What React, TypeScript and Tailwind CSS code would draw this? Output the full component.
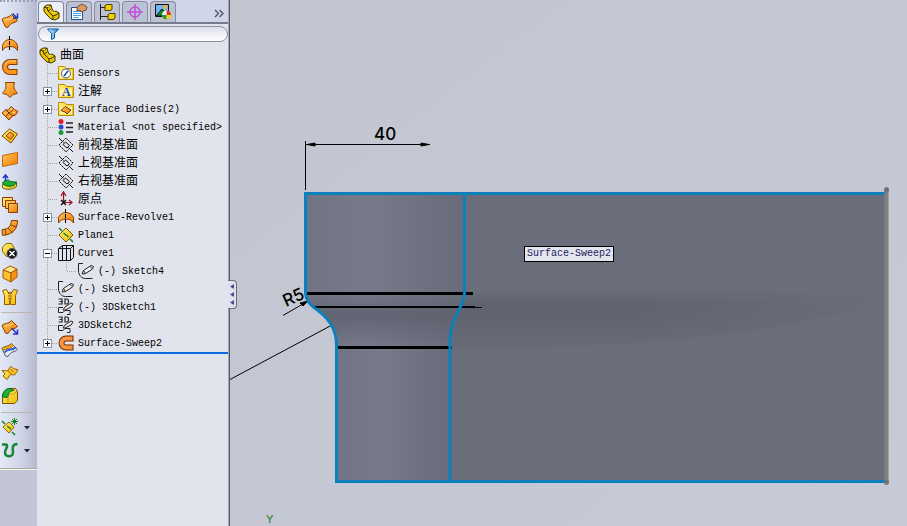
import { useState } from "react";
import type { ReactNode } from "react";

type Tool = { name: string; art: ReactNode; menu?: boolean };

type TreeNode = {
  label: string;
  icon: ReactNode;
  cjk?: boolean;
  expander?: "plus" | "minus";
  nested?: boolean;
  last?: boolean;
};

const stroke = "#8a3d00";

const Defs = () => (
  <svg className="absolute h-0 w-0" aria-hidden="true">
    <defs>
      <linearGradient id="orange" x1="0" y1="0" x2="1" y2="1">
        <stop offset="0" stopColor="#ffc65c" />
        <stop offset="1" stopColor="#ee7a00" />
      </linearGradient>
      <linearGradient id="yellow" x1="0" y1="0" x2="1" y2="1">
        <stop offset="0" stopColor="#fff27a" />
        <stop offset="1" stopColor="#f0b800" />
      </linearGradient>
      <linearGradient id="blue" x1="0" y1="0" x2="1" y2="0">
        <stop offset="0" stopColor="#e8f6ff" />
        <stop offset="1" stopColor="#1a86d8" />
      </linearGradient>
    </defs>
  </svg>
);

const wave = "M2 9.500C5 6.500 8 8.500 11.500 4.500L17.500 10.500C14 14 12 11 8 17.500L5.500 17z";

const tools: Tool[] = [
  {
    name: "Extruded Surface",
    art: (
      <>
        <path d={wave} fill="url(#orange)" stroke={stroke} />
        <path d="M5.500 10.500c3-2 4 0 7-3" fill="none" stroke="#ffe0a0" />
        <path d="M12.500 3.500l4 4M17.500 3.500v4.500H13" stroke="#1735c0" strokeWidth="1.500" fill="none" />
      </>
    ),
  },
  {
    name: "Revolved Surface",
    art: (
      <>
        <path d="M2.500 17.500v-5C4 8 7 6.500 10 6.500s6 2 7.500 6v5c-2-3-4-4-7.500-4s-5.500 1-7.500 4z" fill="url(#orange)" stroke={stroke} />
        <path d="M9.500 3v15" stroke="#000" strokeDasharray="4 1" />
      </>
    ),
  },
  {
    name: "Swept Surface",
    art: (
      <>
        <path d="M17.500 6H10a5 5 0 0 0 0 10h7.500" fill="none" stroke={stroke} strokeWidth="6" />
        <path d="M16.500 6H10a5 5 0 0 0 0 10h6.500" fill="none" stroke="#fa951e" strokeWidth="4" />
        <path d="M16 5h-6a6 6 0 0 0-5 4" fill="none" stroke="#ffcb73" />
      </>
    ),
  },
  {
    name: "Lofted Surface",
    art: (
      <path
        d="M5.500 3.500h9c-1 4-1 7 3 10.500c-2 1.500-3 1-4.500 1.500l-3 3-3-3c-1.500-.5-3 0-4.500-1.500C6 11 6.500 8 5.500 3.500z"
        fill="url(#orange)"
        stroke={stroke}
      />
    ),
  },
  {
    name: "Boundary Surface",
    art: (
      <>
        <path d="M2 11l4-3.500 2 1 3-4 3.500 3 3.500 2-3 4h-2l-4 4.500-3-3z" fill="url(#orange)" stroke={stroke} />
        <path d="M6 8l3 3 4-3M6 14l3-3 4 3" stroke={stroke} fill="none" />
        <path d="M4.500 10.500l2 1M10 7h2M9 14l1 1M13 10.500h2" stroke="#ffe39a" />
      </>
    ),
  },
  {
    name: "Filled Surface",
    art: (
      <>
        <path d="M2 11l7.500-7 8 5-6.500 9z" fill="url(#yellow)" stroke={stroke} />
        <path d="M6 11l4-4 4 3-3.500 4.500z" fill="url(#orange)" stroke={stroke} />
      </>
    ),
  },
  { name: "Planar Surface", art: <path d="M2.500 7.500l15-3v11l-15 3z" fill="url(#orange)" stroke="#c86510" /> },
  {
    name: "Offset Surface",
    art: (
      <>
        <path d="M2.500 13.500v3c3 3 11 2 14-1v-4z" fill="url(#yellow)" stroke="#5d6500" />
        <path d="M2.500 12c2-3 5-3 6-3 1 2 5 2 8 2-1 5-11 6-14 1z" fill="#1fb031" stroke="#08651a" />
        <path d="M5.500 10V4M3 7l2.500-3L8 7" stroke="#1735d0" strokeWidth="1.500" fill="none" />
      </>
    ),
  },
  {
    name: "Radiate Surface",
    art: (
      <g stroke={stroke}>
        <path d="M2.500 3.500h10v9h-10z" fill="#ffe06a" />
        <path d="M5.500 6.500h10v8h-10z" fill="#ffc14d" />
        <path d="M8.500 9.500h9v9h-9z" fill="url(#orange)" />
      </g>
    ),
  },
  {
    name: "Ruled Surface",
    art: (
      <>
        <path d="M11.500 3.500h6c0 9-5 14-15 15l-.5-6c6 0 9-3 9.500-9z" fill="url(#orange)" stroke={stroke} />
        <path d="M11 8l6 2M8 11l5 5M5 12l1 6" stroke={stroke} />
      </>
    ),
  },
  {
    name: "Delete Face",
    art: (
      <>
        <path d="M2.500 7l4-3.500h5l3 5-3 8h-5l-4-5z" fill="url(#yellow)" stroke="#8c6500" />
        <circle cx="12" cy="13.500" r="5" fill="#171717" stroke="#555" />
        <path d="M9.500 11l5 5m0-5l-5 5" stroke="#fff" strokeWidth="1.500" />
      </>
    ),
  },
  {
    name: "Replace Face",
    art: (
      <g stroke="#a45a00">
        <path d="M3 7l7-4 7 3-6 4z" fill="#ffe68c" />
        <path d="M3 7l8 3v9l-8-4z" fill="#ffbf35" />
        <path d="M11 10l6-4v8l-6 5z" fill="#f49410" />
      </g>
    ),
  },
  {
    name: "Knit Surface",
    art: (
      <>
        <path d="M2.500 4.500l4-1 1.500 3h4l1.500-3 4 1-2 5v9h-5l-.500-5-.500 5h-5v-9z" fill="url(#yellow)" stroke="#9a5a00" />
        <path d="M10 6v8M8 7.500h1m2 0h1M8 10h1m2 0h1M8 12.500h1m2 0h1" stroke="#b05000" />
      </>
    ),
  },
];

const tools2: Tool[] = [
  {
    name: "Extend Surface",
    art: (
      <>
        <path d={wave} fill="url(#orange)" stroke={stroke} />
        <path d="M5.500 10.500c3-2 4 0 7-3" fill="none" stroke="#ffe0a0" />
        <path d="M11.500 12l6 6M17.500 13.500V18H13" stroke="#2a34c8" strokeWidth="1.500" fill="none" />
      </>
    ),
  },
  {
    name: "Trim Surface",
    art: (
      <>
        <path d={wave} fill="#e9ecf4" stroke="#555" />
        <path d="M2 9.500c3-3 6-1 9.500-5l2 2c-3 4-7 2-10 5z" fill="#f5b52a" stroke="#9a6500" />
        <path d="M4.500 13.500c4-5 7-1 11-5" stroke="#305dd8" strokeWidth="2" fill="none" />
      </>
    ),
  },
  {
    name: "Untrim Surface",
    art: (
      <>
        <path d="M2 8.500l5.500.5 3-4.500 3 2 4.500 1.500-3.500 5-4-.5-3.500 5-4-3.500 2-2z" fill="url(#yellow)" stroke="#9a5a00" />
        <path d="M8 9l4 3.500M10 7l4 3" stroke="#e07600" strokeWidth="1.500" />
      </>
    ),
  },
  {
    name: "Fillet",
    art: (
      <>
        <path d="M2.500 9l6-5.500h7l2 3v9l-3 3h-12z" fill="url(#yellow)" stroke="#7b5200" />
        <path d="M2.500 12c0-5 3-8.500 7-8.500 2 0 4 1 4.500 2-4 0-6 3-6 7z" fill="#1fb031" stroke="#08651a" />
        <path d="M8 12v6M8 12c0-2 2-3 6-3l3-3" stroke="#c89a10" fill="none" />
      </>
    ),
  },
];

const tools3: Tool[] = [
  {
    name: "Reference Geometry",
    menu: true,
    art: (
      <>
        <path d="M3 11l6-5 5 5-5 6z" fill="url(#yellow)" stroke="#856500" />
        <path d="M2 5l3 3M12 16l3 3M7 10l4 3" stroke="#178024" strokeWidth="1.500" />
        <path d="M14.500 2v7M11 5.500h7M12 3l5 5m0-5l-5 5" stroke="#178024" />
      </>
    ),
  },
  {
    name: "Curves",
    menu: true,
    art: (
      <path
        d="M2 5.500h4c3 1-1 5-1 8 0 5 8 5 8 0 0-4-2-8 4.500-8.500"
        fill="none"
        stroke="#16853a"
        strokeWidth="2.500"
      />
    ),
  },
];

const Part = () => (
  <g stroke="#3f3500">
    <path d="M1 3l3-2h4l1 4 2 3 2-1 3 2v5l-4 2-4-1-5-5-2-3z" fill="#e8c500" />
    <path d="M1 3l3 1 1 3 5 5 3-1 3-2M4 4l4-3M10 12v3M5 7l3-2" fill="none" />
    <path d="M4.500 2.500h1.500M10 9l2-1" fill="none" stroke="#fff9b0" />
  </g>
);

const Folder = ({ children }: { children: ReactNode }) => (
  <>
    <path d="M.5 3.500v-2h6l2 2h7v11H.5z" fill="url(#yellow)" stroke="#b98b00" />
    <path d="M2 5.500h12v8H2z" fill="#fff3a4" />
    {children}
  </>
);

const PlaneArt = () => (
  <g fill="none" stroke="#111">
    <path d="M1 8l7-7 7 7-7 7z" strokeDasharray="2 .6" />
    <path d="M1 1l4.500 4.500M10.500 10.500L15 15M5 7.500L7.500 5l4 3.500L9 11z" />
  </g>
);

const SketchArt = () => (
  <g fill="none" stroke="#222">
    <path d="M5 .5H.5V8c0 4 3 7.500 7 7.500h7" />
    <path d="M4 11l1.500-3.500L13 2.500l2.500 1-1 2.500-7 4.500z" fill="#f0f0f0" />
    <path d="M12 3.500l2 2M5.500 7.500l2 3" />
  </g>
);

const Sketch3DArt = () => (
  <g fill="none" stroke="#222">
    <path d="M.500 0H4v5H.500M1.500 2.500H4M7 0h2c2 0 2 5 0 5H7z" strokeWidth="1.200" />
    <path d="M5 11l2-3 6-4 2 1-2 3-6 3z" fill="#eee" />
    <path d="M5 8.500H.500v5H5l2-2h5v4H9" />
  </g>
);

const RevolveArt = () => (
  <>
    <path d="M.5 14V8.500C2 5 5 3.500 8 3.500s6 1.500 7.500 5V14c-2-3-4-4-7.500-4s-5.500 1-7.500 4z" fill="url(#orange)" stroke={stroke} />
    <path d="M7.500 0v15" stroke="#000" strokeDasharray="4 1" />
  </>
);

const SweepArt = () => (
  <>
    <path d="M15.500 3.500H8a4.500 4.500 0 0 0 0 9h7.500" fill="none" stroke="#6d2b00" strokeWidth="6" />
    <path d="M14.500 3.500H8a4.500 4.500 0 0 0 0 9h6.500" fill="none" stroke="#fb9440" strokeWidth="4" />
  </>
);

const tree: TreeNode[] = [
  {
    label: "Sensors",
    icon: (
      <Folder>
        <circle cx="8" cy="8.500" r="4.500" fill="#fff" stroke="#345a8c" />
        <path d="M6 11l4-5" stroke="#16408c" strokeWidth="1.500" />
      </Folder>
    ),
  },
  {
    label: "注解",
    cjk: true,
    expander: "plus",
    icon: (
      <Folder>
        <text x="4" y="13" fontFamily="Liberation Serif, serif" fontSize="12" fontWeight="700" fill="#1746b0">A</text>
      </Folder>
    ),
  },
  {
    label: "Surface Bodies(2)",
    expander: "plus",
    icon: (
      <Folder>
        <path d="M3 9.500l4-4 6 3.500-4 4-2-2z" fill="url(#orange)" stroke="#6d3500" />
      </Folder>
    ),
  },
  {
    label: "Material <not specified>",
    icon: (
      <>
        <circle cx="3" cy="2.500" r="2.500" fill="#e01c2c" />
        <circle cx="3" cy="8" r="2.500" fill="#3448d8" />
        <circle cx="3" cy="13.500" r="2.500" fill="#1c9c34" />
        <path d="M8 4h7M8 8.500h7M8 13h7" stroke="#222" strokeWidth="1.500" />
      </>
    ),
  },
  { label: "前视基准面", cjk: true, icon: <PlaneArt /> },
  { label: "上视基准面", cjk: true, icon: <PlaneArt /> },
  { label: "右视基准面", cjk: true, icon: <PlaneArt /> },
  {
    label: "原点",
    cjk: true,
    icon: (
      <>
        <path d="M5.500 12V2M3 5l2.500-4L8 5M6 11.500h8M11 9l3 2.500-3 2.500" stroke="#a00f1c" fill="none" strokeWidth="1.200" />
        <path d="M3 9l5 5m0-5l-5 5" stroke="#111" strokeWidth="1.500" />
      </>
    ),
  },
  { label: "Surface-Revolve1", expander: "plus", icon: <RevolveArt /> },
  {
    label: "Plane1",
    icon: (
      <>
        <path d="M1 8l7-7 7 7-7 7z" fill="url(#yellow)" stroke="#6c5b00" />
        <path d="M1 1l3 3M12 12l3 3M5.500 6l5 4" stroke="#178024" strokeWidth="1.500" />
      </>
    ),
  },
  {
    label: "Curve1",
    expander: "minus",
    icon: (
      <g fill="none" stroke="#111">
        <path d="M.5 3.500l4-3h11v12l-3 3H.5z" />
        <path d="M.5 3.500h4v12M4.500 3.500h8v12M8.500 1v14M12.500 3.500l3-3M4.500 1v3" />
      </g>
    ),
  },
  { label: "(-) Sketch4", nested: true, icon: <SketchArt /> },
  { label: "(-) Sketch3", icon: <SketchArt /> },
  { label: "(-) 3DSketch1", icon: <Sketch3DArt /> },
  { label: "3DSketch2", icon: <Sketch3DArt /> },
  { label: "Surface-Sweep2", expander: "plus", last: true, icon: <SweepArt /> },
];

const ToolGroup = ({ items }: { items: Tool[] }) => (
  <div className="flex flex-col">
    {items.map((tool) => (
      <button key={tool.name} aria-label={tool.name} className="flex h-[23px] items-center">
        <svg viewBox="0 0 22 23" className="h-[23px] w-[22px]">
          {tool.art}
        </svg>
        {tool.menu && (
          <svg viewBox="0 0 6 4" className="ml-0.5 h-1 w-1.5">
            <path d="M0 0h6L3 3.500z" fill="#20243c" />
          </svg>
        )}
      </button>
    ))}
  </div>
);

const Toolbar = () => (
  <aside className="flex w-[37px] shrink-0 flex-col bg-[#c1c5d6]">
    <div className="border-b border-[#f4f4f0] bg-linear-to-r from-[#e3e8f5] via-[#d3d8e9] to-[#b4b9d0]">
      <div className="border-b border-[#a9a99c] pb-1.5">
        <div className="border-t-2 border-dotted border-[#9ca0b4] pb-2" />
        <ToolGroup items={tools} />
        <hr className="my-[3px] ml-px border-[#bcb9a9]" />
        <ToolGroup items={tools2} />
        <hr className="mt-1 mb-[3px] ml-px border-[#bcb9a9]" />
        <ToolGroup items={tools3} />
      </div>
    </div>
  </aside>
);

const tabs: { id: string; art: ReactNode }[] = [
  { id: "Feature Tree", art: <Part /> },
  {
    id: "Properties",
    art: (
      <>
        <path d="M.5 3.500h11v12H.5z" fill="#fff" stroke="#1a4e94" />
        <path d="M2 7.500h8M2 9.500h8M2 11.500h8M2 13.500h6" stroke="#4aa0e8" />
        <path d="M6 3l5-3 5 3-1 3-5 2-1-2-3 1z" fill="#d99a66" stroke="#7d4a26" />
      </>
    ),
  },
  {
    id: "Configurations",
    art: (
      <>
        <path d="M1.500 0v16M1 3.500h6M1 12.500h9" stroke="#222" fill="none" />
        <path d="M6 1.500l2-1h5v5l-2 1H6zM9 10.500l2-1h5v5l-2 1H9z" fill="#f2d000" stroke="#4c4000" />
      </>
    ),
  },
  {
    id: "Dimensions",
    art: (
      <g fill="none" stroke="#c04fd8" strokeWidth="1.500">
        <circle cx="8" cy="8" r="5" />
        <path d="M8 0v16M0 8h16" />
      </g>
    ),
  },
  {
    id: "Display",
    art: (
      <>
        <path d="M.5.500h13v12H.5z" fill="#6cb6f4" stroke="#111" />
        <path d="M1 12l6-7 6 7z" fill="#138a2e" stroke="#111" />
        <circle cx="10" cy="3" r="2" fill="#ffb020" />
        <circle cx="11.500" cy="11" r="4.500" fill="#f4cd20" />
        <path d="M11.500 11V6.500A4.500 4.500 0 0 1 16 11z" fill="#e63220" />
        <path d="M11.500 11v4.500A4.500 4.500 0 0 1 7 11z" fill="#2b9b38" />
        <path d="M11.500 11V6.500A4.500 4.500 0 0 0 7 11z" fill="#e8f0ff" />
      </>
    ),
  },
];

const Tabs = () => {
  const [active, setActive] = useState("Feature Tree");

  return (
    <div className="flex h-6 items-end border-b-2 border-[#777b8c] bg-[#d0d5e7] pl-px">
      <div role="tablist" className="flex gap-0.5">
        {tabs.map((tab) => (
          <button
            key={tab.id}
            role="tab"
            aria-label={tab.id}
            aria-selected={active === tab.id}
            onClick={() => setActive(tab.id)}
            className={`flex h-[21px] w-[26px] items-center justify-center rounded-t-sm border border-b-0 border-[#858a9d] ${
              active === tab.id ? "bg-[#eceff6]" : "bg-[#bcc1d4]"
            }`}
          >
            <svg viewBox="-1 -1 18 18" className="h-[18px] w-[18px]">
              {tab.art}
            </svg>
          </button>
        ))}
      </div>
      <button aria-label="More" className="mr-1 mb-1 ml-auto">
        <svg viewBox="0 0 10 9" className="h-[9px] w-2.5">
          <path d="M1 1l3.500 3.500L1 8M5.500 1L9 4.500 5.500 8" fill="none" stroke="#4d5167" strokeWidth="1.300" />
        </svg>
      </button>
    </div>
  );
};

const Gutter = ({ node }: { node: TreeNode }) => (
  <span className="grid w-5 shrink-0">
    <svg viewBox="0 0 20 18" className="col-start-1 row-start-1 h-[18px] w-5">
      <path
        d={node.last ? "M10.500 0V9" : "M10.500 0V18"}
        stroke="#a9a696"
        strokeDasharray="1 1"
      />
      {!node.nested && <path d="M11 9.500H20" stroke="#a9a696" strokeDasharray="1 1" />}
    </svg>
    {node.expander && (
      <button
        aria-label={node.expander === "plus" ? "Expand" : "Collapse"}
        className="col-start-1 row-start-1 ml-1.5 h-[9px] w-[9px] self-center border border-[#8292ac] bg-white"
      >
        <svg viewBox="0 0 7 7" className="h-[7px] w-[7px]">
          <path d={node.expander === "plus" ? "M1 3.500h5M3.500 1v5" : "M1 3.500h5"} stroke="#000" />
        </svg>
      </button>
    )}
  </span>
);

const TreeRow = ({ node }: { node: TreeNode }) => (
  <li className="flex h-[18px] items-center">
    <Gutter node={node} />
    {node.nested && (
      <svg viewBox="0 0 20 18" className="h-[18px] w-5 shrink-0">
        <path d="M9.500 0V9.500H20" fill="none" stroke="#a9a696" strokeDasharray="1 1" />
      </svg>
    )}
    <svg viewBox="-1 -1 18 18" className="h-[18px] w-[18px] shrink-0">
      {node.icon}
    </svg>
    <span
      className={`ml-[3px] pt-0.5 whitespace-pre text-black ${node.cjk ? "text-xs" : "text-[10px]"} leading-[18px]`}
    >
      {node.label}
    </span>
  </li>
);

const FeaturePanel = () => (
  <section className="relative w-[193px] shrink-0 border-r border-[#55586a] bg-[#e1e4ec]">
    <div className="min-h-screen border-r border-[#a5a8b8]">
      <Tabs />
      <div className="pt-0.5 pb-1 pl-px">
        <label className="flex h-4 items-center rounded-full border border-[#8c90a2] bg-linear-to-b from-[#dcdfe9] to-white pl-2">
          <svg viewBox="0 0 12 12" className="h-3 w-3 shrink-0">
            <path d="M.5 1h11L7.500 5.500V10l-3 1.500v-6z" fill="url(#blue)" stroke="#0c5ca8" />
          </svg>
          <input aria-label="Filter" className="w-full min-w-0 bg-transparent px-1 text-[10px] outline-none" />
        </label>
      </div>
      <div className="border-b-2 border-[#0a6be0]">
        <div className="flex h-[18px] items-center pl-0.5">
          <svg viewBox="0 0 17 17" className="h-[17px] w-[17px] shrink-0">
            <Part />
          </svg>
          <span className="ml-1 pt-0.5 text-xs leading-[18px]">曲面</span>
        </div>
        <ul>
          {tree.map((node) => (
            <TreeRow key={node.label} node={node} />
          ))}
        </ul>
      </div>
    </div>
    {/* splitter handle sits over the viewport edge */}
    <button
      aria-label="Collapse panel"
      className="absolute top-[280px] -right-2 z-10 flex h-[29px] w-[9px] flex-col items-center justify-center gap-[3px] rounded-r-sm border border-l-0 border-[#6b6e80] bg-[#dfe2ec]"
    >
      {[0, 1, 2].map((i) => (
        <svg key={i} viewBox="0 0 4 5" className="h-[5px] w-1">
          <path d="M4 0v5L0 2.500z" fill="#4a4f82" />
        </svg>
      ))}
    </button>
  </section>
);

const Model = () => (
  <svg
    viewBox="230 0 677 526"
    preserveAspectRatio="xMinYMin slice"
    className="absolute inset-0 h-full w-full"
    fontFamily="Inter, sans-serif"
  >
    <defs>
      <linearGradient id="upper" gradientUnits="userSpaceOnUse" x1="306" y1="0" x2="464" y2="0">
        <stop offset="0" stopColor="#717484" />
        <stop offset=".4" stopColor="#777a8a" />
        <stop offset="1" stopColor="#686b78" />
      </linearGradient>
      <linearGradient id="lower" gradientUnits="userSpaceOnUse" x1="337" y1="0" x2="450" y2="0">
        <stop offset="0" stopColor="#717484" />
        <stop offset=".4" stopColor="#777a8a" />
        <stop offset="1" stopColor="#686b78" />
      </linearGradient>
      <linearGradient id="neck" x1="0" y1="0" x2="0" y2="1">
        <stop offset="0" stopColor="#5c5f6c" stopOpacity="0" />
        <stop offset=".4" stopColor="#5c5f6c" stopOpacity=".8" />
        <stop offset="1" stopColor="#5c5f6c" stopOpacity="0" />
      </linearGradient>
      <linearGradient id="shade" x1="0" y1="0" x2="0" y2="1">
        <stop offset="0" stopColor="#5f626f" stopOpacity="0" />
        <stop offset=".2" stopColor="#5f626f" stopOpacity=".9" />
        <stop offset=".5" stopColor="#5f626f" stopOpacity=".8" />
        <stop offset="1" stopColor="#5f626f" stopOpacity="0" />
      </linearGradient>
      <linearGradient id="fade" x1="0" y1="0" x2="1" y2="0">
        <stop offset=".4" stopColor="#fff" />
        <stop offset="1" stopColor="#000" />
      </linearGradient>
      <mask id="fadeRight">
        <path d="M450 280H880V360H450z" fill="url(#fade)" />
      </mask>
    </defs>

    <path d="M450 193H886V482H450z" fill="#6a6d7a" />
    <path d="M450 291H880V303C770 335 620 350 450 350z" fill="url(#shade)" mask="url(#fadeRight)" />
    <path d="M306 193H465V293C464 300 462 304 460 307C454 318 450 328 450 347H337C336 328 328 317 314 307C309 304 306 300 306 293z" fill="url(#upper)" />
    <path d="M306 293H464C464 300 462 304 460 307C454 318 450 328 450 347H337C336 328 328 317 314 307C309 304 306 300 306 293z" fill="url(#neck)" />
    <path d="M337 347H450V482H337z" fill="url(#lower)" />

    <g stroke="#000" fill="none">
      <path d="M306 293.500H473M337 347.500H452" strokeWidth="3" />
      <path d="M313 307H475" strokeWidth="2" />
      <path d="M470 307.500H482M305.500 141V190M306 144.500H430" />
      <path d="M230 379.500L332 325M283 315.500L308 301" />
      <path d="M307 144.500l8-1.500v3zM429 144.500l-8-1.500v3zM308 301l-8 2 3 3z" fill="#000" />
    </g>

    <g stroke="#0a80bd" strokeWidth="3" fill="none">
      <path d="M886 193.500H305.500V293C306 300 309 304 314 307.500C328 317 336.500 328 336.500 345V481.500H886" />
      <path d="M464.500 194V293C464.500 300 462 304 460 307.500C454 318 450 328 450 345V481" />
    </g>
    <path d="M886.500 189V483" stroke="#808080" strokeWidth="4" strokeLinecap="round" />
    <circle cx="886.500" cy="190" r="2.500" fill="#707276" />
    <circle cx="886.500" cy="482" r="2.500" fill="#707276" />

    <g fontSize="17" fontWeight="500">
      <text x="374" y="140">40</text>
      <text x="286" y="307" transform="rotate(-24 286 307)">R5</text>
    </g>
    <text x="266" y="523" fontSize="11" fill="#1c7a1c">Y</text>
  </svg>
);

export default function App() {
  return (
    <div className="flex min-h-screen overflow-hidden bg-[#c5c8d2] font-['Liberation_Mono','Noto_Sans_CJK_SC',monospace]">
      <Defs />
      <Toolbar />
      <FeaturePanel />
      <main className="relative min-w-0 flex-1 bg-linear-to-br from-[#c3c6d1] to-[#c6cad6]">
        <Model />
        <div className="absolute top-[246px] left-[294px] border border-black bg-[#e4e6ee] px-0.5 text-[10px] leading-[14px] text-[#20205c]">
          Surface-Sweep2
        </div>
      </main>
    </div>
  );
}
